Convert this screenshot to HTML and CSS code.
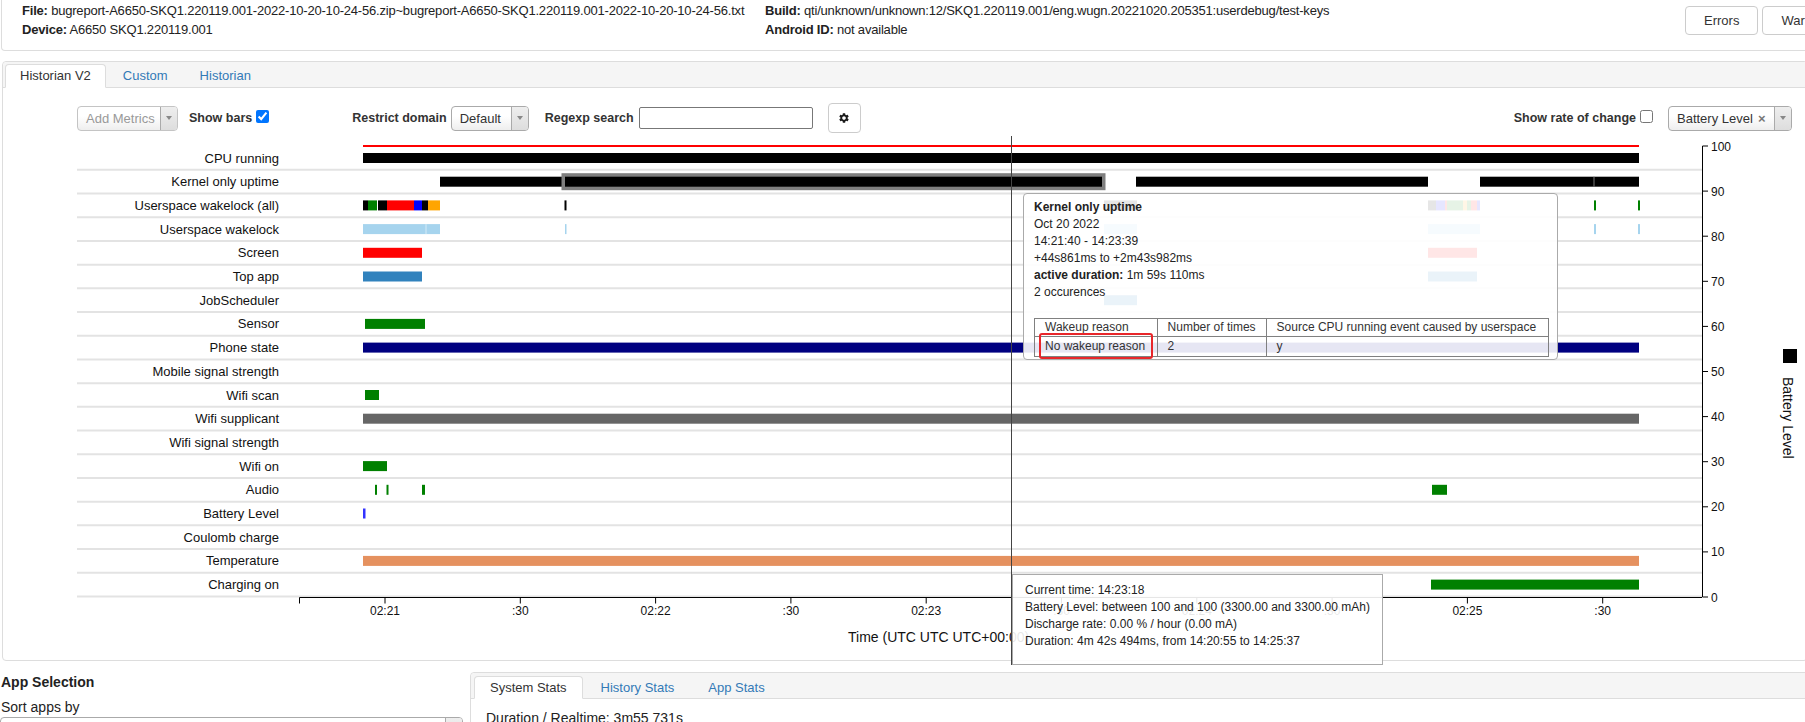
FILE: index.html
```html
<!DOCTYPE html>
<html>
<head>
<meta charset="utf-8">
<title>Battery Historian</title>
<link rel="stylesheet" href="styles.css">
</head>
<body>
<div class="header">
  <div class="info info-file">
    <div><b>File:</b> bugreport-A6650-SKQ1.220119.001-2022-10-20-10-24-56.zip~bugreport-A6650-SKQ1.220119.001-2022-10-20-10-24-56.txt</div>
    <div><b>Device:</b> A6650 SKQ1.220119.001</div>
  </div>
  <div class="info info-build">
    <div><b>Build:</b> qti/unknown/unknown:12/SKQ1.220119.001/eng.wugn.20221020.205351:userdebug/test-keys</div>
    <div><b>Android ID:</b> not available</div>
  </div>
  <div class="hbtns"><button class="btn">Errors</button><button class="btn">Warnings</button></div>
</div>

<div class="panel main">
  <div class="tabbar">
    <span class="tab active">Historian V2</span>
    <span class="tab">Custom</span>
    <span class="tab">Historian</span>
  </div>
  <div class="toolbar">
    <div class="sel sel-metrics"><span class="sel-text placeholder">Add Metrics</span><span class="sel-arrow"></span></div>
    <span class="tlabel show-bars">Show bars</span><input type="checkbox" class="cb" checked>
    <span class="tlabel restrict">Restrict domain</span>
    <div class="sel sel-domain"><span class="sel-text">Default</span><span class="sel-arrow"></span></div>
    <span class="tlabel regexp">Regexp search</span>
    <input type="text" class="rx">
    <button class="btn gear"><svg width="12" height="12" viewBox="0 0 24 24"><path fill="#1a1a1a" d="M19.14 12.94c.04-.3.06-.61.06-.94 0-.32-.02-.64-.07-.94l2.03-1.58a.49.49 0 0 0 .12-.61l-1.920-3.32a.49.49 0 0 0-.59-.22l-2.39.96c-.5-.38-1.03-.7-1.62-.94l-.36-2.54a.48.48 0 0 0-.48-.41h-3.84c-.24 0-.43.17-.47.41l-.36 2.54c-.59.24-1.13.57-1.62.94l-2.39-.96c-.22-.08-.47 0-.59.22L2.74 8.87c-.12.21-.08.47.12.61l2.03 1.58c-.05.3-.09.63-.09.94s.02.64.07.94l-2.03 1.58a.49.49 0 0 0-.12.61l1.92 3.32c.12.22.37.29.59.22l2.39-.96c.5.38 1.030.7 1.62.94l.36 2.54c.05.24.24.41.48.41h3.84c.24 0 .44-.17.47-.41l.36-2.54c.59-.24 1.13-.56 1.62-.94l2.39.96c.22.08.47 0 .59-.22l1.92-3.32c.12-.22.07-.47-.12-.61l-2.01-1.58zM12 15.6c-1.98 0-3.6-1.62-3.6-3.6s1.62-3.6 3.6-3.6 3.6 1.62 3.6 3.6-1.62 3.6-3.6 3.6z"/></svg></button>
    <div class="tright">
      <span class="tlabel">Show rate of change</span><input type="checkbox" class="cb">
      <div class="sel sel-battery"><span class="sel-text">Battery Level</span><span class="sel-x">&#215;</span><span class="sel-arrow"></span></div>
    </div>
  </div>
  <div class="chart">
    <svg class="plot" width="1802" height="526" viewBox="3 134 1802 526">
      <g class="grid">
        <line x1="77" x2="1702" y1="169.85" y2="169.85"/>
        <line x1="77" x2="1702" y1="193.55" y2="193.55"/>
        <line x1="77" x2="1702" y1="217.25" y2="217.25"/>
        <line x1="77" x2="1702" y1="240.95" y2="240.95"/>
        <line x1="77" x2="1702" y1="264.65" y2="264.65"/>
        <line x1="77" x2="1702" y1="288.35" y2="288.35"/>
        <line x1="77" x2="1702" y1="312.05" y2="312.05"/>
        <line x1="77" x2="1702" y1="335.75" y2="335.75"/>
        <line x1="77" x2="1702" y1="359.45" y2="359.45"/>
        <line x1="77" x2="1702" y1="383.15" y2="383.15"/>
        <line x1="77" x2="1702" y1="406.85" y2="406.85"/>
        <line x1="77" x2="1702" y1="430.55" y2="430.55"/>
        <line x1="77" x2="1702" y1="454.25" y2="454.25"/>
        <line x1="77" x2="1702" y1="477.95" y2="477.95"/>
        <line x1="77" x2="1702" y1="501.65" y2="501.65"/>
        <line x1="77" x2="1702" y1="525.35" y2="525.35"/>
        <line x1="77" x2="1702" y1="549.05" y2="549.05"/>
        <line x1="77" x2="1702" y1="572.75" y2="572.75"/>
        <line x1="77" x2="1702" y1="596.45" y2="596.45"/>
      </g>

      <g class="ylab">
        <text x="279" y="162.5">CPU running</text>
        <text x="279" y="186.2">Kernel only uptime</text>
        <text x="279" y="209.9">Userspace wakelock (all)</text>
        <text x="279" y="233.6">Userspace wakelock</text>
        <text x="279" y="257.3">Screen</text>
        <text x="279" y="281">Top app</text>
        <text x="279" y="304.7">JobScheduler</text>
        <text x="279" y="328.4">Sensor</text>
        <text x="279" y="352.1">Phone state</text>
        <text x="279" y="375.8">Mobile signal strength</text>
        <text x="279" y="399.5">Wifi scan</text>
        <text x="279" y="423.2">Wifi supplicant</text>
        <text x="279" y="446.9">Wifi signal strength</text>
        <text x="279" y="470.6">Wifi on</text>
        <text x="279" y="494.3">Audio</text>
        <text x="279" y="518">Battery Level</text>
        <text x="279" y="541.7">Coulomb charge</text>
        <text x="279" y="565.4">Temperature</text>
        <text x="279" y="589.1">Charging on</text>
      </g>

      <line x1="363" x2="1639" y1="146" y2="146" stroke="#ff0000" stroke-width="2"/>

      <!-- CPU running -->
      <rect x="363" y="153" width="1276" height="10" fill="#000"/>
      <!-- Kernel only uptime -->
      <rect x="440" y="176.7" width="124" height="10" fill="#000"/>
      <rect x="561.5" y="173.2" width="544" height="17" fill="#7f7f7f"/>
      <rect x="565" y="176.7" width="537" height="10" fill="#000"/>
      <rect x="1136" y="176.7" width="292" height="10" fill="#000"/>
      <rect x="1480" y="176.7" width="159" height="10" fill="#000"/>
      <line x1="1594" x2="1594" y1="176.7" y2="186.7" stroke="#777" stroke-width="1"/>
      <!-- Userspace wakelock (all) -->
      <rect x="363" y="200.4" width="5" height="10" fill="#000"/>
      <rect x="368" y="200.4" width="9" height="10" fill="#008000"/>
      <rect x="378" y="200.4" width="9" height="10" fill="#000"/>
      <rect x="387" y="200.4" width="27" height="10" fill="#ff0000"/>
      <rect x="414" y="200.4" width="8" height="10" fill="#0000ff"/>
      <rect x="422" y="200.4" width="6" height="10" fill="#000"/>
      <rect x="428" y="200.4" width="12" height="10" fill="#ffa500"/>
      <rect x="564.5" y="200.4" width="2" height="10" fill="#000"/>
      <rect x="1104" y="200.4" width="33" height="10" fill="#000"/>
      <rect x="1428" y="200.4" width="8" height="10" fill="#000"/>
      <rect x="1436" y="200.4" width="9" height="10" fill="#0000ff"/>
      <rect x="1445" y="200.4" width="2" height="10" fill="#ff0000"/>
      <rect x="1447" y="200.4" width="16" height="10" fill="#008000"/>
      <rect x="1463" y="200.4" width="4" height="10" fill="#ffa500"/>
      <rect x="1467" y="200.4" width="4" height="10" fill="#008000"/>
      <rect x="1471" y="200.4" width="6" height="10" fill="#ff0000"/>
      <rect x="1477" y="200.4" width="3" height="10" fill="#0000ff"/>
      <rect x="1594" y="200.4" width="2" height="10" fill="#008000"/>
      <rect x="1638" y="200.4" width="2" height="10" fill="#008000"/>
      <!-- Userspace wakelock -->
      <rect x="363" y="224.1" width="77" height="10" fill="#a6d4ee"/>
      <line x1="426" x2="426" y1="224.1" y2="234.1" stroke="#d4ebf7" stroke-width="1"/>
      <rect x="565" y="224.1" width="1.5" height="10" fill="#a6d4ee"/>
      <rect x="1104" y="224.1" width="33" height="10" fill="#a6d4ee"/>
      <rect x="1428" y="224.1" width="52" height="10" fill="#a6d4ee"/>
      <rect x="1594" y="224.1" width="2" height="10" fill="#a6d4ee"/>
      <rect x="1638" y="224.1" width="2" height="10" fill="#a6d4ee"/>
      <!-- Screen -->
      <rect x="363" y="247.8" width="59" height="10" fill="#ff0000"/>
      <rect x="1428" y="247.8" width="49" height="10" fill="#ff0000"/>
      <!-- Top app -->
      <rect x="363" y="271.5" width="59" height="10" fill="#3182bd"/>
      <rect x="1428" y="271.5" width="49" height="10" fill="#3182bd"/>
      <!-- JobScheduler -->
      <rect x="1104" y="295.2" width="33" height="10" fill="#3182bd"/>
      <!-- Sensor -->
      <rect x="365" y="318.9" width="60" height="10" fill="#008000"/>
      <!-- Phone state -->
      <rect x="363" y="342.6" width="1276" height="10" fill="#000080"/>
      <!-- Wifi scan -->
      <rect x="365" y="390" width="14" height="10" fill="#008000"/>
      <!-- Wifi supplicant -->
      <rect x="363" y="413.7" width="1276" height="10" fill="#666666"/>
      <!-- Wifi on -->
      <rect x="363" y="461.1" width="24" height="10" fill="#008000"/>
      <!-- Audio -->
      <rect x="375" y="484.8" width="2" height="10" fill="#008000"/>
      <rect x="386.5" y="484.8" width="2" height="10" fill="#008000"/>
      <rect x="422" y="484.8" width="3" height="10" fill="#008000"/>
      <rect x="1432" y="484.8" width="15" height="10" fill="#008000"/>
      <!-- Battery Level -->
      <rect x="363" y="508.5" width="2.5" height="10" fill="#3333ff"/>
      <!-- Temperature -->
      <rect x="363" y="555.9" width="1276" height="10" fill="#e5915f"/>
      <!-- Charging on -->
      <rect x="1431" y="579.6" width="208" height="10" fill="#008000"/>

      <!-- x axis -->
      <path class="axis" d="M299.5 603.5V597.5H1702"/>
      <g class="axis">
        <line x1="385" x2="385" y1="597.5" y2="603.5"/>
        <line x1="520.3" x2="520.3" y1="597.5" y2="603.5"/>
        <line x1="655.6" x2="655.6" y1="597.5" y2="603.5"/>
        <line x1="790.9" x2="790.9" y1="597.5" y2="603.5"/>
        <line x1="926.2" x2="926.2" y1="597.5" y2="603.5"/>
        <line x1="1061.5" x2="1061.5" y1="597.5" y2="603.5"/>
        <line x1="1196.8" x2="1196.8" y1="597.5" y2="603.5"/>
        <line x1="1332.1" x2="1332.1" y1="597.5" y2="603.5"/>
        <line x1="1467.4" x2="1467.4" y1="597.5" y2="603.5"/>
        <line x1="1602.7" x2="1602.7" y1="597.5" y2="603.5"/>
      </g>
      <g class="xlab">
        <text x="385" y="614.5">02:21</text>
        <text x="520.3" y="614.5">:30</text>
        <text x="655.6" y="614.5">02:22</text>
        <text x="790.9" y="614.5">:30</text>
        <text x="926.2" y="614.5">02:23</text>
        <text x="1061.5" y="614.5">:30</text>
        <text x="1196.8" y="614.5">02:24</text>
        <text x="1332.1" y="614.5">:30</text>
        <text x="1467.4" y="614.5">02:25</text>
        <text x="1602.7" y="614.5">:30</text>
      </g>
      <text class="xtitle" x="848" y="642">Time (UTC UTC UTC+00:00)</text>

      <!-- right axis -->
      <path class="axis" d="M1708 146H1702.5V597H1708"/>
      <g class="axis">
        <line x1="1702.5" x2="1708" y1="191.1" y2="191.1"/>
        <line x1="1702.5" x2="1708" y1="236.2" y2="236.2"/>
        <line x1="1702.5" x2="1708" y1="281.3" y2="281.3"/>
        <line x1="1702.5" x2="1708" y1="326.4" y2="326.4"/>
        <line x1="1702.5" x2="1708" y1="371.5" y2="371.5"/>
        <line x1="1702.5" x2="1708" y1="416.6" y2="416.6"/>
        <line x1="1702.5" x2="1708" y1="461.7" y2="461.7"/>
        <line x1="1702.5" x2="1708" y1="506.8" y2="506.8"/>
        <line x1="1702.5" x2="1708" y1="551.9" y2="551.9"/>
      </g>
      <g class="rlab">
        <text x="1711" y="150.5">100</text>
        <text x="1711" y="195.6">90</text>
        <text x="1711" y="240.7">80</text>
        <text x="1711" y="285.8">70</text>
        <text x="1711" y="330.9">60</text>
        <text x="1711" y="376">50</text>
        <text x="1711" y="421.1">40</text>
        <text x="1711" y="466.2">30</text>
        <text x="1711" y="511.3">20</text>
        <text x="1711" y="556.4">10</text>
        <text x="1711" y="601.5">0</text>
      </g>

      <!-- legend -->
      <rect x="1783" y="349" width="14" height="14" fill="#000"/>
      <text class="legend" transform="translate(1783 377) rotate(90)">Battery Level</text>

      <!-- hover cursor -->
      <line x1="1011.5" x2="1011.5" y1="136" y2="665" stroke="#444" stroke-width="1"/>
    </svg>

    <div class="tip tip-event">
      <div class="tip-title">Kernel only uptime</div>
      <div>Oct 20 2022</div>
      <div>14:21:40 - 14:23:39</div>
      <div>+44s861ms to +2m43s982ms</div>
      <div><b>active duration:</b> 1m 59s 110ms</div>
      <div>2 occurences</div>
      <table class="wk">
        <tr><th class="c1">Wakeup reason</th><th class="c2">Number of times</th><th class="c3">Source CPU running event caused by userspace</th></tr>
        <tr class="data"><td>No wakeup reason</td><td>2</td><td>y</td></tr>
      </table>
      <div class="mark"></div>
    </div>

    <div class="tip tip-time">
      <div>Current time: 14:23:18</div>
      <div>Battery Level: between 100 and 100 (3300.00 and 3300.00 mAh)</div>
      <div>Discharge rate: 0.00 % / hour (0.00 mA)</div>
      <div>Duration: 4m 42s 494ms, from 14:20:55 to 14:25:37</div>
    </div>
  </div>
</div>

<div class="bottom">
  <div class="app-sel">
    <div class="app-title">App Selection</div>
    <div class="sort-label">Sort apps by</div>
    <div class="sel sel-sort"><span class="sel-text"></span><span class="sel-arrow"></span></div>
  </div>
  <div class="panel stats">
    <div class="tabbar small">
      <span class="tab active">System Stats</span>
      <span class="tab">History Stats</span>
      <span class="tab">App Stats</span>
    </div>
    <div class="stats-body">Duration / Realtime: 3m55 731s</div>
  </div>
</div>
</body>
</html>
```

FILE: styles.css
```css
* { box-sizing: border-box; }
html, body { margin: 0; padding: 0; overflow: hidden; background: #fff; }
body {
  width: 1805px;
  height: 722px;
  font-family: "Liberation Sans", Arial, Helvetica, sans-serif;
  color: #222;
}

/* ---------- header ---------- */
.header {
  display: flex;
  width: 1830px;
  height: 51px;
  margin-left: 1px;
  border: 1px solid #ddd;
  border-top: 0;
  border-radius: 0 0 4px 4px;
  font-size: 13px;
  letter-spacing: -0.2px;
  line-height: 18.5px;
}
.info { padding-top: 2px; flex: none; white-space: nowrap; }
.info-file { width: 763px; padding-left: 20px; }
.info-build { width: 920px; }
.hbtns { display: flex; padding-top: 6px; flex: none; }

.btn {
  height: 29px;
  padding: 0 18px;
  border: 1px solid #ccc;
  border-radius: 4px;
  background: #fff;
  font: 13px "Liberation Sans", Arial, sans-serif;
  color: #333;
  margin-right: 4px;
}

/* ---------- panels & tabs ---------- */
.panel {
  border: 1px solid #ddd;
  border-radius: 4px;
}
.main {
  margin: 10px 0 0 2px;
  width: 1806px;
}
.tabbar {
  display: flex;
  align-items: flex-end;
  height: 26px;
  padding-left: 2px;
  background: #f5f5f5;
  border-bottom: 1px solid #ddd;
  border-radius: 4px 4px 0 0;
}
.tab {
  height: 24px;
  margin-bottom: -1px;
  margin-right: 2px;
  padding: 0 14px;
  line-height: 22px;
  border: 1px solid transparent;
  border-radius: 4px 4px 0 0;
  font-size: 13px;
  color: #337ab7;
  white-space: nowrap;
}
.tab.active {
  background: #fff;
  border-color: #ddd;
  border-bottom-color: transparent;
  color: #333;
}

/* ---------- toolbar ---------- */
.toolbar {
  display: flex;
  align-items: center;
  height: 46px;
  padding: 14px 15px 0 74px;
}
.tlabel {
  font-size: 12.5px;
  font-weight: bold;
  color: #333;
  white-space: nowrap;
}
.show-bars { margin-left: 11px; }
.restrict { margin-left: 83px; }
.regexp { margin-left: 16px; }
.cb {
  width: 13px;
  height: 13px;
  margin: -4px 0 0 4px;
}
.sel {
  display: flex;
  height: 25px;
  border: 1px solid #aaa;
  border-radius: 4px;
  background: linear-gradient(#fff 40%, #eee);
  font-size: 13px;
  color: #333;
  flex: none;
}
.sel-text {
  flex: 1;
  padding-left: 8px;
  line-height: 23px;
  white-space: nowrap;
  overflow: hidden;
}
.sel-text.placeholder { color: #999; }
.sel-arrow {
  width: 17px;
  border-left: 1px solid #aaa;
  border-radius: 0 3px 3px 0;
  background: linear-gradient(#eee, #ddd);
  display: flex;
  align-items: center;
  justify-content: center;
}
.sel-arrow::after {
  content: "";
  border-left: 3px solid transparent;
  border-right: 3px solid transparent;
  border-top: 4px solid #888;
}
.sel-metrics { width: 101px; border-color: #c4c4c4; }
.sel-domain { width: 78px; margin-left: 4px; }
.sel-battery { width: 124px; margin-left: 15px; }
.sel-x {
  width: 16px;
  line-height: 23px;
  color: #777;
  font-size: 13px;
  font-weight: bold;
}
.rx {
  width: 174px;
  height: 22px;
  margin-left: 5px;
  border: 1px solid #777;
  border-radius: 2px;
  padding: 0 4px;
}
.gear {
  width: 33px;
  height: 30px;
  padding: 0;
  margin-left: 15px;
  display: flex;
  align-items: center;
  justify-content: center;
}
.tright {
  margin-left: auto;
  display: flex;
  align-items: center;
}

/* ---------- chart ---------- */
.chart {
  position: relative;
  height: 526px;
}
.plot { display: block; overflow: visible; }
.grid line { stroke: #e3e3e3; stroke-width: 2; }
.ylab text {
  font: 13px "Liberation Sans", Arial, sans-serif;
  fill: #111;
  text-anchor: end;
}
.axis { fill: none; stroke: #000; stroke-width: 1; }
.axis line { stroke: #000; }
.xlab text {
  font: 12px "Liberation Sans", Arial, sans-serif;
  fill: #111;
  text-anchor: middle;
}
.rlab text {
  font: 12px "Liberation Sans", Arial, sans-serif;
  fill: #111;
}
.xtitle {
  font: 14px "Liberation Sans", Arial, sans-serif;
  fill: #111;
}
.legend {
  font: 14px "Liberation Sans", Arial, sans-serif;
  fill: #111;
}

/* ---------- tooltips ---------- */
.tip {
  position: absolute;
  background: rgba(255, 255, 255, 0.9);
  border: 1px solid #aaa;
  font-size: 12px;
  line-height: 17px;
  color: #222;
  white-space: nowrap;
}
.tip-event {
  left: 1020px;
  top: 59px;
  width: 535px;
  height: 167px;
  border-radius: 4px;
  padding: 4.5px 8px 0 10px;
}
.tip-title { font-weight: bold; }
.wk {
  margin-top: 17.5px;
  border-collapse: collapse;
  width: 515px;
  font-size: 12px;
  color: #333;
}
.wk th, .wk td {
  border: 1px solid #808080;
  padding: 0 10px;
  text-align: left;
  font-weight: normal;
}
.wk th { height: 18px; }
.wk td { height: 20px; }
.c1 { width: 123px; }
.c2 { width: 109px; }
.c3 { width: 283px; }
.mark {
  position: absolute;
  left: 15px;
  top: 139px;
  width: 114px;
  height: 26px;
  border: 2.5px solid #e8262a;
  border-radius: 3px;
}
.tip-time {
  left: 1009px;
  top: 440px;
  width: 371px;
  height: 91px;
  padding: 6.5px 0 0 12px;
}

/* ---------- bottom ---------- */
.bottom {
  display: flex;
  margin-top: 11px;
}
.app-sel { width: 463px; flex: none; }
.app-title {
  font-weight: bold;
  font-size: 14px;
  line-height: 20px;
  padding-left: 1px;
}
.sort-label {
  font-size: 14px;
  line-height: 20px;
  margin-top: 5px;
  padding-left: 1px;
}
.sel-sort { width: 463px; height: 30px; }
.stats {
  flex: none;
  width: 1400px;
  margin-left: 7px;
}
.tabbar.small { padding-left: 3px; }
.tabbar.small .tab {
  height: 23px;
  line-height: 21px;
  padding: 0 15px;
}
.stats-body {
  padding: 10px 15px;
  font-size: 14px;
  line-height: 18px;
}
```
